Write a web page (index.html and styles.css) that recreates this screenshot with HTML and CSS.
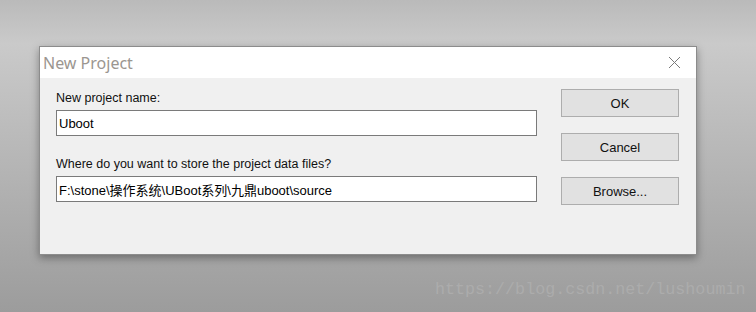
FILE: index.html
```html
<!DOCTYPE html>
<html lang="en">
<head>
    <meta charset="UTF-8">
    <meta name="viewport" content="width=device-width, initial-scale=1.0">
    <title>New Project</title>
    <link rel="stylesheet" href="styles.css">
</head>
<body>
    <div class="dialog">
        <div class="title-bar">
            <span class="title">New Project</span>
            <span class="close">
                <svg width="13" height="13" viewBox="0 0 13 13">
                    <path d="M1 1 L12 12 M12 1 L1 12" stroke="#7a7a7a" stroke-width="1" fill="none"/>
                </svg>
            </span>
        </div>

        <div class="content">
            <div class="fields">
                <div class="input-group">
                    <label for="projectName">New project name:</label>
                    <input type="text" id="projectName" value="Uboot">
                </div>

                <div class="input-group">
                    <label for="projectPath">Where do you want to store the project data files?</label>
                    <input type="text" id="projectPath" value="F:\stone\操作系统\UBoot系列\九鼎uboot\source">
                </div>
            </div>

            <div class="buttons">
                <button type="button">OK</button>
                <button type="button">Cancel</button>
                <button type="button">Browse...</button>
            </div>
        </div>
    </div>

    <div class="watermark">https://blog.csdn.net/lushoumin</div>
</body>
</html>
```

FILE: styles.css
```css
html, body {
    height: 100%;
}

body {
    margin: 0;
    padding: 46px 0 0 39px;
    box-sizing: border-box;
    background: linear-gradient(to bottom, #bababa 0%, #cacaca 14%, #9c9c9c 100%);
    font-family: "Liberation Sans", Arial, "Noto Sans CJK SC", sans-serif;
    overflow: hidden;
}

.dialog {
    width: 656px;
    height: 207px;
    border: 1px solid #8c8c8c;
    background: #f0f0f0;
    box-shadow: 0 3px 8px rgba(0, 0, 0, 0.35);
}

.title-bar {
    height: 31px;
    background: white;
    display: flex;
    justify-content: space-between;
    align-items: center;
}

.title {
    font-family: "Noto Sans", sans-serif;
    font-size: 16px;
    color: #9b9690;
    padding-left: 3px;
    margin-top: 1px;
}

.close {
    display: flex;
    margin-right: 15px;
    margin-top: -1px;
}

.content {
    display: flex;
    padding-left: 16px;
}

.fields {
    width: 481px;
    padding-top: 12px;
}

.input-group {
    margin-bottom: 20px;
}

.input-group label {
    display: block;
    font-size: 12.5px;
    line-height: 16px;
    color: #111;
    margin-bottom: 4px;
}

.input-group input {
    display: block;
    width: 100%;
    height: 26px;
    box-sizing: border-box;
    margin: 0;
    padding: 0 2px;
    border: 1px solid #7a7a7a;
    background: white;
    font-family: "Liberation Sans", Arial, "Noto Sans CJK SC", sans-serif;
    font-size: 13px;
    color: #000;
    outline: none;
}

.buttons {
    display: flex;
    flex-direction: column;
    gap: 16px;
    margin-left: 24px;
    padding-top: 11px;
}

button {
    width: 118px;
    height: 28px;
    box-sizing: border-box;
    background-color: #e1e1e1;
    border: 1px solid #adadad;
    font-family: "Liberation Sans", Arial, sans-serif;
    font-size: 13px;
    color: #111;
    padding: 0;
}

.watermark {
    position: absolute;
    left: 435px;
    top: 280px;
    font-family: "Liberation Mono", monospace;
    font-size: 16.7px;
    color: #acacac;
}
```
